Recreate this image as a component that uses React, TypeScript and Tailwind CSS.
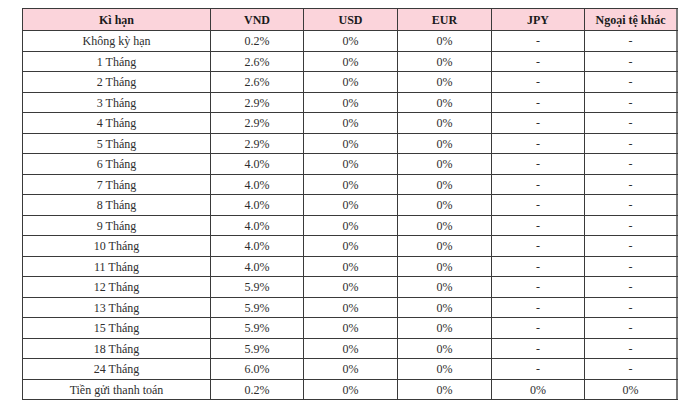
import React from 'react';

const rows: [string, string, string, string, string, string][] = [
    ['Không kỳ hạn', '0.2%', '0%', '0%', '-', '-'],
    ['1 Tháng', '2.6%', '0%', '0%', '-', '-'],
    ['2 Tháng', '2.6%', '0%', '0%', '-', '-'],
    ['3 Tháng', '2.9%', '0%', '0%', '-', '-'],
    ['4 Tháng', '2.9%', '0%', '0%', '-', '-'],
    ['5 Tháng', '2.9%', '0%', '0%', '-', '-'],
    ['6 Tháng', '4.0%', '0%', '0%', '-', '-'],
    ['7 Tháng', '4.0%', '0%', '0%', '-', '-'],
    ['8 Tháng', '4.0%', '0%', '0%', '-', '-'],
    ['9 Tháng', '4.0%', '0%', '0%', '-', '-'],
    ['10 Tháng', '4.0%', '0%', '0%', '-', '-'],
    ['11 Tháng', '4.0%', '0%', '0%', '-', '-'],
    ['12 Tháng', '5.9%', '0%', '0%', '-', '-'],
    ['13 Tháng', '5.9%', '0%', '0%', '-', '-'],
    ['15 Tháng', '5.9%', '0%', '0%', '-', '-'],
    ['18 Tháng', '5.9%', '0%', '0%', '-', '-'],
    ['24 Tháng', '6.0%', '0%', '0%', '-', '-'],
    ['Tiền gửi thanh toán', '0.2%', '0%', '0%', '0%', '0%'],
];

const headers = ['Kì hạn', 'VND', 'USD', 'EUR', 'JPY', 'Ngoại tệ khác'];

const cols = 'grid grid-cols-[188px_93px_94px_94px_93px_93px]';

const App: React.FC = () => {
    return (
        <div className="w-[700px] h-[412px] bg-white pt-2 pl-[22px] font-['Liberation_Serif',serif] text-[12px] text-[#2e2e2e]">
            <div className="w-[656px] border-l border-t border-[#3a3a3a]">
                {/* header */}
                <div className={`${cols} h-[22px] bg-[#fbd4db] border-b border-[#3a3a3a] font-bold text-[#1a1a1a]`}>
                    {headers.map((h, i) => (
                        <div
                            key={h}
                            className={`flex items-center justify-center ${i === 5 ? 'border-r-2 border-[#7a7a7a]' : 'border-r border-[#3a3a3a]'}`}
                        >
                            {h}
                        </div>
                    ))}
                </div>

                {/* body */}
                {rows.map((r, ri) => (
                    <div
                        key={r[0]}
                        className={`${cols} border-b border-[#3a3a3a] ${ri % 2 === 0 ? 'h-[21px]' : 'h-[20px]'}`}
                    >
                        {r.map((c, i) => (
                            <div
                                key={i}
                                className={`flex items-center justify-center ${i === 5 ? 'border-r-2 border-[#7a7a7a]' : 'border-r border-[#3a3a3a]'}`}
                            >
                                {c}
                            </div>
                        ))}
                    </div>
                ))}
            </div>
        </div>
    );
};

export default App;
